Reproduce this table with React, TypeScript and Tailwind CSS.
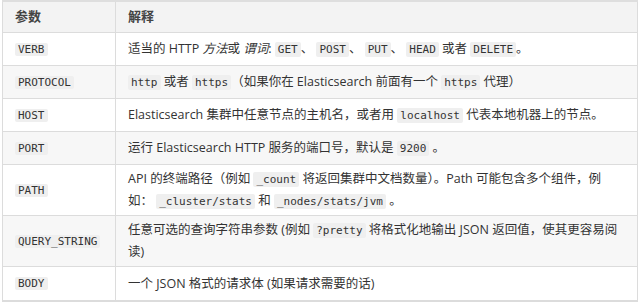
import React from "react";

const C = ({ children }: { children: React.ReactNode }) => (
  <code className="rounded-[2px] bg-[#efefef] px-[3px] py-[1px] font-['DejaVu_Sans_Mono','Liberation_Mono',monospace] text-[11px] leading-none text-[#333]">
    {children}
  </code>
);

const rows: { k: string; v: React.ReactNode; tall?: boolean }[] = [
  {
    k: "VERB",
    v: (
      <>
        适当的 HTTP <i>方法</i>或 <i>谓词</i>: <C>GET</C>、 <C>POST</C>、 <C>PUT</C>、 <C>HEAD</C> 或者 <C>DELETE</C>。
      </>
    ),
  },
  {
    k: "PROTOCOL",
    v: (
      <>
        <C>http</C> 或者 <C>https</C>（如果你在 Elasticsearch 前面有一个 <C>https</C> 代理）
      </>
    ),
  },
  {
    k: "HOST",
    v: (
      <>
        Elasticsearch 集群中任意节点的主机名，或者用 <C>localhost</C> 代表本地机器上的节点。
      </>
    ),
  },
  {
    k: "PORT",
    v: (
      <>
        运行 Elasticsearch HTTP 服务的端口号，默认是 <C>9200</C> 。
      </>
    ),
  },
  {
    k: "PATH",
    tall: true,
    v: (
      <>
        API 的终端路径（例如 <C>_count</C> 将返回集群中文档数量）。Path 可能包含多个组件，例
        <br />
        如： <C>_cluster/stats</C> 和 <C>_nodes/stats/jvm</C> 。
      </>
    ),
  },
  {
    k: "QUERY_STRING",
    tall: true,
    v: (
      <>
        任意可选的查询字符串参数 (例如 <C>?pretty</C> 将格式化地输出 JSON 返回值，使其更容易阅
        <br />
        读)
      </>
    ),
  },
  {
    k: "BODY",
    v: <>一个 JSON 格式的请求体 (如果请求需要的话)</>,
  },
];

export default function App() {
  return (
    <div className="h-[302px] w-[640px] bg-white pl-[2px] pr-[2px] font-['Open_Sans','Noto_Sans_CJK_SC',sans-serif] text-[12.5px] text-[#333]">
      <div className="border-t-[2px] border-[#dedede]">
        <div className="border-x border-b-[3px] border-[#dcdcdc]">
          <div className="flex h-[31px] items-center border-b border-[#dcdcdc] bg-[#f3f3f3] text-[13px] font-bold text-[#444]">
            <div className="flex h-full w-[113px] shrink-0 items-center border-r border-[#dcdcdc] px-3">参数</div>
            <div className="px-3">解释</div>
          </div>
          {rows.map((r, i) => (
            <div
              key={r.k}
              className={`flex border-b border-[#dcdcdc] last:border-b-0 ${r.tall ? "h-[51px]" : "h-[33px]"} ${i % 2 === 1 ? "bg-[#f7f7f7]" : "bg-white"}`}
            >
              <div className="flex w-[113px] shrink-0 items-center border-r border-[#dcdcdc] px-3">
                <C>{r.k}</C>
              </div>
              <div className="flex flex-1 items-center px-3">
                <div className="whitespace-nowrap leading-[22px]">{r.v}</div>
              </div>
            </div>
          ))}
        </div>
      </div>
    </div>
  );
}
